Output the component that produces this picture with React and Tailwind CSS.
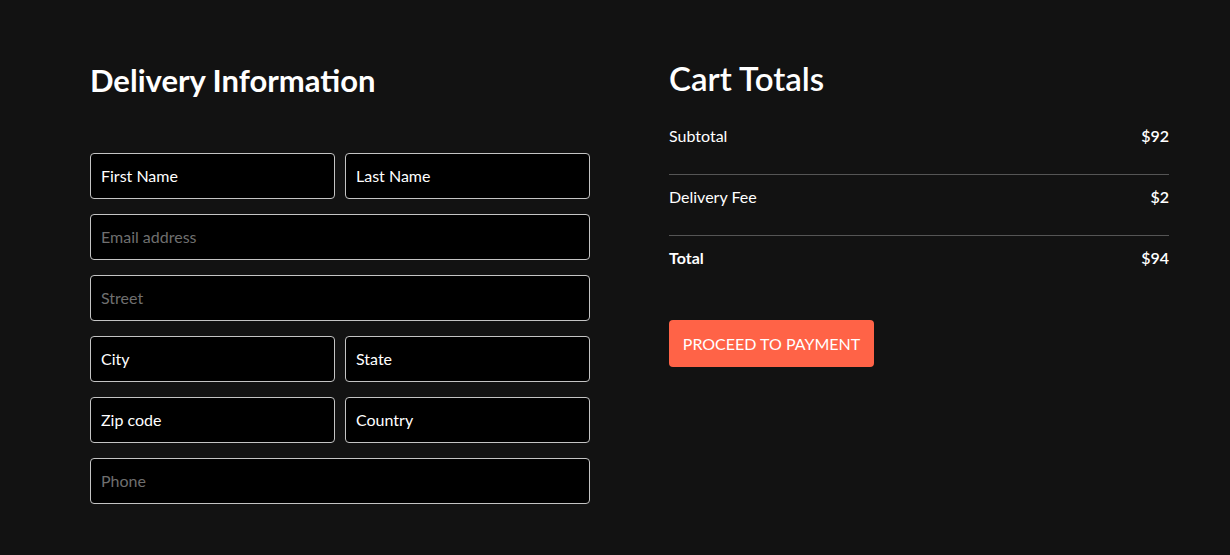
import React from "react";

const Field = ({ placeholder, filled }) => (
  <input
    type="text"
    placeholder={placeholder}
    className={`w-full h-[46px] pl-[10px] pr-[11px] pb-[2px] bg-black border border-[#c4c4c4] rounded-[4px] text-[16px] text-white outline-none ${
      filled ? "placeholder:text-white" : "placeholder:text-[#6f6f6f]"
    }`}
  />
);

const Row = ({ label, value, bold }) => (
  <div className={`flex justify-between h-[20px] items-center text-[16px] text-white ${bold ? "font-bold" : ""}`}>
    <p>{label}</p>
    <p className="font-semibold">{value}</p>
  </div>
);

export default function App() {
  return (
    <div className="min-h-[555px] w-full bg-[#121212] font-['Lato',sans-serif] text-white">
      <div className="flex pl-[90px] gap-[79px]">
        {/* Delivery form */}
        <div className="w-[500px] pt-[62px]">
          <h2 className="text-[31px] leading-[36px] font-bold">Delivery Information</h2>
          <div className="mt-[55px] flex flex-col gap-[15px]">
            <div className="flex gap-[10px]">
              <Field placeholder="First Name" filled />
              <Field placeholder="Last Name" filled />
            </div>
            <Field placeholder="Email address" />
            <Field placeholder="Street" />
            <div className="flex gap-[10px]">
              <Field placeholder="City" filled />
              <Field placeholder="State" filled />
            </div>
            <div className="flex gap-[10px]">
              <Field placeholder="Zip code" filled />
              <Field placeholder="Country" filled />
            </div>
            <Field placeholder="Phone" />
          </div>
        </div>

        {/* Cart totals */}
        <div className="w-[500px] pt-[58px]">
          <h2 className="text-[33px] leading-[40px] font-semibold">Cart Totals</h2>
          <div className="mt-[28px]">
            <Row label="Subtotal" value="$92" />
            <hr className="mt-[28px] mb-[12px] border-0 border-t border-[#555]" />
            <Row label="Delivery Fee" value="$2" />
            <hr className="mt-[28px] mb-[12px] border-0 border-t border-[#555]" />
            <Row label="Total" value="$94" bold />
          </div>
          <button className="mt-[52px] w-[205px] h-[47px] bg-[#ff6347] rounded-[4px] text-white text-[16px] uppercase">
            Proceed to payment
          </button>
        </div>
      </div>
    </div>
  );
}
